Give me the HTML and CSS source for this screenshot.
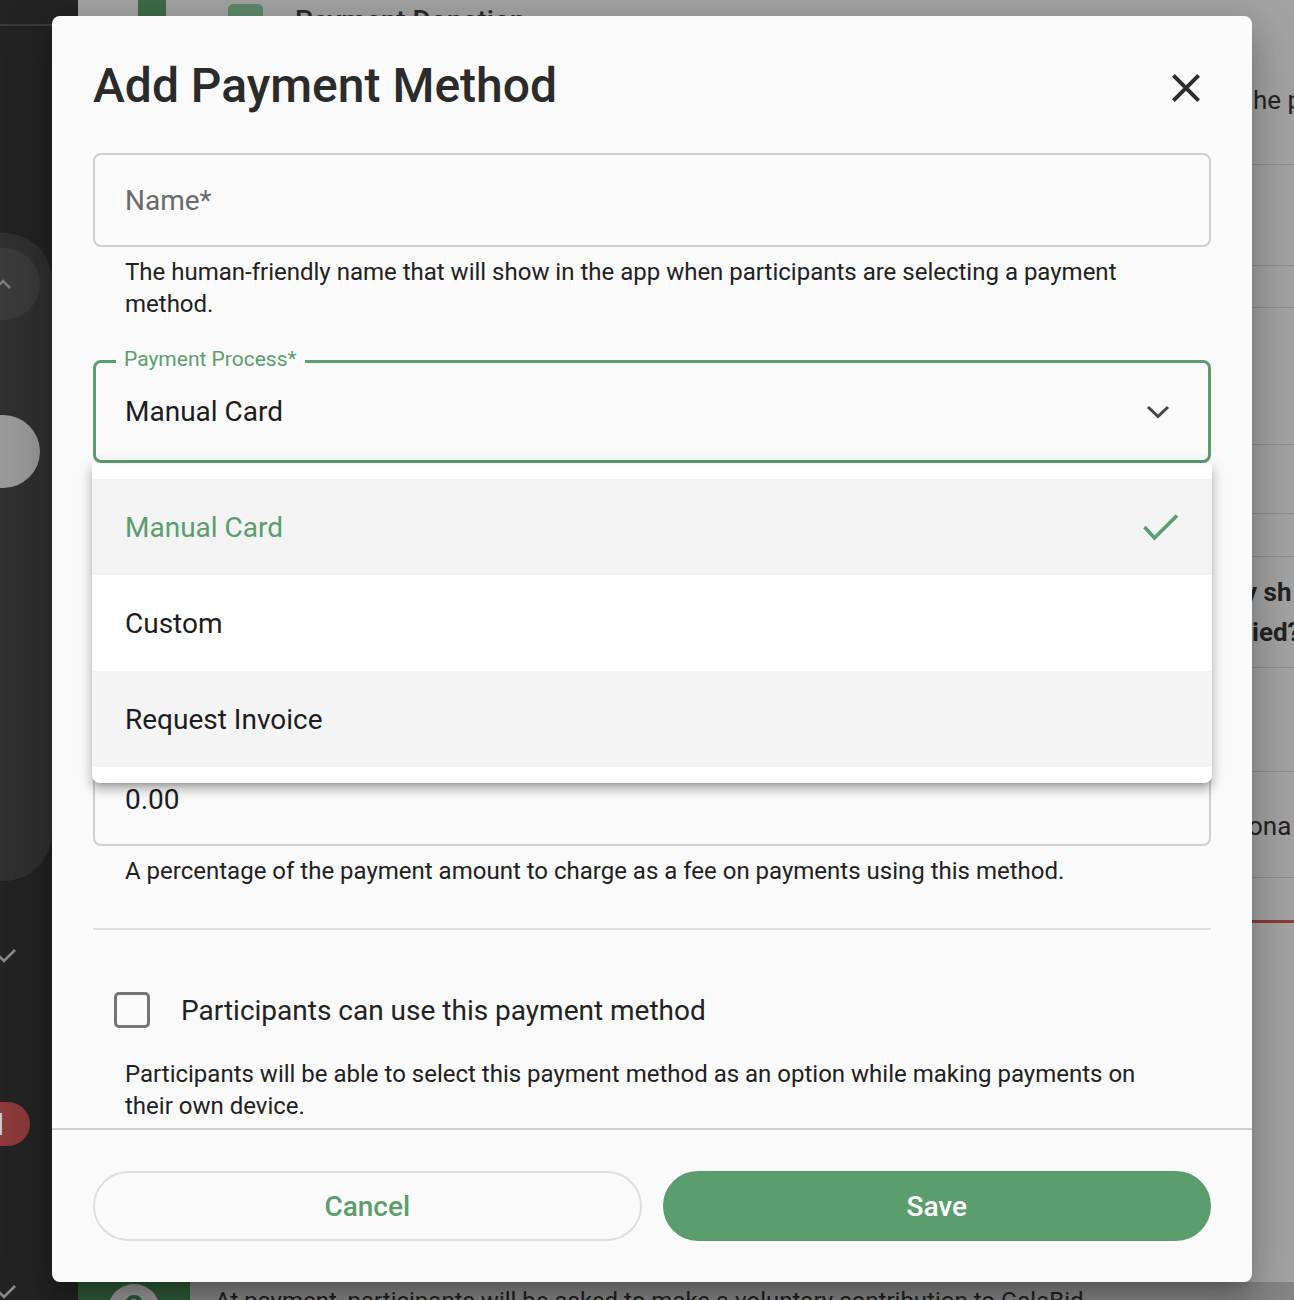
FILE: index.html
```html
<!DOCTYPE html>
<html lang="en">
<head>
<meta charset="utf-8">
<title>Add Payment Method</title>
<link rel="stylesheet" href="styles.css">
</head>
<body>
<div class="page">
  <aside class="sidebar">
    <div class="sb-line"></div>
    <div class="sb-pill">
      <div class="sb-circle">
        <svg width="18" height="12" viewBox="0 0 18 12"><polyline points="2,10 9,3 16,10" fill="none" stroke="#7a7a7a" stroke-width="2.5"/></svg>
      </div>
      <div class="sb-circle sb-circle-light"></div>
    </div>
    <div class="sb-check sb-check-1">
      <svg width="18" height="16" viewBox="0 0 18 16"><polyline points="1,8 6,13 17,2" fill="none" stroke="#8a8a8a" stroke-width="2.6"/></svg>
    </div>
    <div class="sb-badge"><span class="sb-badge-mark"></span></div>
    <div class="sb-check sb-check-2">
      <svg width="18" height="16" viewBox="0 0 18 16"><polyline points="1,8 6,13 17,2" fill="none" stroke="#8a8a8a" stroke-width="2.6"/></svg>
    </div>
  </aside>
  <main class="main">
    <section class="row r1">
      <div class="top-head">
        <span class="step-bar"></span>
        <span class="top-check"></span>
        <span class="top-title">Payment Donation</span>
      </div>
      <p class="edge edge-r1">he p</p>
    </section>
    <section class="row r2"></section>
    <section class="row r3"></section>
    <section class="row r4"></section>
    <section class="row r5"></section>
    <section class="row r6"></section>
    <section class="row r7">
      <p class="edge edge-bold edge-a">y sh</p>
      <p class="edge edge-bold edge-b">ied?</p>
    </section>
    <section class="row r8"></section>
    <section class="row r9">
      <p class="edge edge-r9">ona</p>
    </section>
    <section class="row r10"></section>
    <section class="row r11"></section>
    <section class="bottom-row">
      <div class="step-cell"><span class="step-num">2</span></div>
      <p class="bottom-text">At payment, participants will be asked to make a voluntary contribution to GalaBid</p>
    </section>
  </main>
</div>

<div class="modal" role="dialog" aria-labelledby="modal-title">
  <header class="modal-header">
    <h1 class="modal-title" id="modal-title">Add Payment Method</h1>
    <button class="close-btn" aria-label="Close">
      <svg width="48" height="48" viewBox="0 0 24 24"><path d="M19 6.41 17.59 5 12 10.59 6.41 5 5 6.41 10.59 12 5 17.59 6.41 19 12 13.41 17.59 19 19 17.59 13.41 12z" fill="#2d2d2d"/></svg>
    </button>
  </header>

  <div class="modal-body">
    <div class="field"><span class="placeholder">Name*</span></div>
    <p class="helper">The human-friendly name that will show in the app when participants are selecting a payment method.</p>

    <div class="select">
      <span class="select-label">Payment Process*</span>
      <span class="select-value">Manual Card</span>
      <svg class="chevron" width="24" height="14" viewBox="0 0 24 14"><polyline points="2,2 12,11.5 22,2" fill="none" stroke="#444" stroke-width="3"/></svg>
      <ul class="menu">
        <li class="menu-item selected">Manual Card
          <svg width="36" height="27" viewBox="0 0 36 27"><polyline points="1.5,13 11.5,24 34,1.5" fill="none" stroke="#5a9e6d" stroke-width="3.6"/></svg>
        </li>
        <li class="menu-item">Custom</li>
        <li class="menu-item hovered">Request Invoice</li>
      </ul>
    </div>

    <div class="field field-fee"><span class="value">0.00</span></div>
    <p class="helper">A percentage of the payment amount to charge as a fee on payments using this method.</p>

    <div class="divider"></div>

    <label class="check-row">
      <span class="checkbox"></span>
      <span class="check-label">Participants can use this payment method</span>
    </label>
    <p class="helper helper-check">Participants will be able to select this payment method as an option while making payments on their own device.</p>
  </div>

  <footer class="modal-footer">
    <button class="btn btn-cancel">Cancel</button>
    <button class="btn btn-save">Save</button>
  </footer>
</div>
</body>
</html>
```

FILE: styles.css
```css
* { box-sizing: border-box; }

html, body {
  margin: 0;
  padding: 0;
}

body {
  width: 1294px;
  height: 1300px;
  overflow: hidden;
  position: relative;
  background: #232323;
  font-family: Roboto, "Noto Sans", "Liberation Sans", sans-serif;
  color: #212121;
}

.page {
  display: flex;
  height: 1300px;
}

/* ---------- sidebar (behind the backdrop) ---------- */
.sidebar {
  width: 78px;
  flex: none;
  background: #232323;
  display: flex;
  flex-direction: column;
  overflow: hidden;
}

.sb-line {
  margin-top: 24px;
  height: 2px;
  background: #3a3a3a;
}

.sb-pill {
  margin-top: 207px;
  margin-left: -8px;
  width: 60px;
  height: 648px;
  background: #303030;
  border-radius: 0 48px 48px 0;
  padding-top: 15px;
  display: flex;
  flex-direction: column;
}

.sb-circle {
  width: 74px;
  height: 72px;
  flex: none;
  margin-left: -26px;
  border-radius: 50%;
  background: #3b3b3b;
  display: flex;
  align-items: center;
  justify-content: center;
}

.sb-circle-light {
  margin-top: 95px;
  height: 73px;
  background: #9a9a9a;
}

.sb-check {
  display: flex;
  margin-left: -2px;
}
.sb-check-1 { margin-top: 67px; }
.sb-check-2 { margin-top: 138px; }

.sb-badge {
  margin-top: 138px;
  margin-left: -20px;
  width: 50px;
  height: 44px;
  border-radius: 22px;
  background: #8b3939;
  display: flex;
  align-items: center;
  padding-left: 18px;
}
.sb-badge-mark {
  width: 4px;
  height: 22px;
  background: #c9c9c9;
}

/* ---------- main page (behind the backdrop) ---------- */
.main {
  flex: 1;
  min-width: 0;
  background: #a3a3a3;
  display: flex;
  flex-direction: column;
  overflow: hidden;
}

.row {
  flex: none;
  border-bottom: 1px solid #8c8c8c;
}
.r1 { height: 165px; }
.r2 { height: 101px; }
.r3 { height: 42px; }
.r4 { height: 137px; }
.r5 { height: 69px; }
.r6 { height: 43px; }
.r7 { height: 111px; padding-top: 15px; }
.r8 { height: 104px; }
.r9 { height: 106px; padding-top: 34px; }
.r10 { height: 45px; border-bottom: 3px solid #8e3a3a; }
.r11 { height: 359px; border-bottom: none; }

.top-head {
  height: 60px;
  display: flex;
  align-items: flex-start;
  padding-left: 60px;
}
.step-bar {
  width: 28px;
  height: 60px;
  background: #3e6a47;
}
.top-check {
  margin-left: 62px;
  margin-top: 4px;
  width: 35px;
  height: 35px;
  border-radius: 5px;
  background: #5f8869;
}
.top-title {
  margin-left: 32px;
  margin-top: 4px;
  font-size: 28px;
  font-weight: 500;
  line-height: 34px;
  color: #2a2a2a;
  white-space: nowrap;
}

.edge {
  margin: 0;
  font-size: 26px;
  line-height: 40px;
  color: #232323;
  white-space: nowrap;
}
.edge-r1 { margin-top: 20px; margin-left: 1175px; }
.edge-bold { font-weight: 700; }
.edge-a { margin-left: 1166px; }
.edge-b { margin-left: 1174px; }
.edge-r9 { margin-left: 1170px; }

.bottom-row {
  flex: none;
  height: 18px;
  display: flex;
  background: #858585;
  overflow: hidden;
}
.step-cell {
  width: 112px;
  flex: none;
  background: #2f5a37;
  padding-left: 30px;
  padding-top: 2px;
}
.step-num {
  display: flex;
  justify-content: center;
  width: 52px;
  height: 52px;
  border-radius: 50%;
  background: #9a9a9a;
  color: #2f5a37;
  font-size: 34px;
  font-weight: 700;
  line-height: 46px;
}
.bottom-text {
  margin: 0 0 0 25px;
  padding-top: 5px;
  font-size: 24px;
  line-height: 28px;
  color: #1f1f1f;
  white-space: nowrap;
}

/* ---------- modal ---------- */
.modal {
  position: absolute;
  left: 52px;
  top: 16px;
  width: 1200px;
  height: 1266px;
  background: #fafafa;
  border-radius: 8px;
  display: flex;
  flex-direction: column;
  box-shadow: 0 11px 15px -7px rgba(0,0,0,.2), 0 24px 38px 3px rgba(0,0,0,.14), 0 9px 46px 8px rgba(0,0,0,.12);
  z-index: 10;
}

.modal-header {
  height: 137px;
  flex: none;
  padding: 35px 41px 0 41px;
  display: flex;
  justify-content: space-between;
  align-items: flex-start;
}

.modal-title {
  margin: 0;
  font-size: 48px;
  font-weight: 500;
  line-height: 70px;
  color: #2b2b2b;
}

.close-btn {
  width: 50px;
  height: 50px;
  margin-top: 12px;
  padding: 0;
  border: none;
  background: transparent;
  display: flex;
  align-items: center;
  justify-content: center;
}

.modal-body {
  flex: 1;
  min-height: 0;
  padding: 0 41px;
  display: flex;
  flex-direction: column;
  overflow: hidden;
}

.field {
  flex: none;
  height: 94px;
  border: 2px solid #cfcfcf;
  border-radius: 8px;
  padding: 0 30px;
  display: flex;
  align-items: center;
  font-size: 28px;
}
.placeholder { color: #6a6a6a; }

.field-fee {
  margin-top: 289px;
}
.value { color: #1d1d1d; }

.helper {
  flex: none;
  margin: 9px 0 0;
  padding: 0 32px;
  font-size: 24px;
  line-height: 32px;
  color: #212121;
}

.select {
  position: relative;
  flex: none;
  margin-top: 40px;
  height: 103px;
  border: 3px solid #5a9e6d;
  border-radius: 8px;
  padding: 0 38px 0 29px;
  display: flex;
  align-items: center;
  justify-content: space-between;
  z-index: 2;
}

.select-label {
  position: absolute;
  top: -16px;
  left: 20px;
  padding: 0 8px;
  background: #fafafa;
  font-size: 21px;
  line-height: 24px;
  color: #5a9e6d;
}

.select-value {
  font-size: 28px;
  color: #1d1d1d;
}

.menu {
  position: absolute;
  top: calc(100% + 3px);
  left: -4px;
  right: -4px;
  margin: 0;
  padding: 16px 0;
  list-style: none;
  background: #ffffff;
  border-radius: 0 0 8px 8px;
  box-shadow: 0 5px 5px -3px rgba(0,0,0,.2), 0 8px 10px 1px rgba(0,0,0,.14), 0 3px 14px 2px rgba(0,0,0,.12);
}

.menu-item {
  height: 96px;
  padding: 0 33px 0 33px;
  display: flex;
  align-items: center;
  justify-content: space-between;
  font-size: 28px;
  color: #1d1d1d;
}
.menu-item.selected {
  background: #f3f3f3;
  color: #5a9e6d;
}
.menu-item.hovered {
  background: #f4f4f4;
}

.divider {
  flex: none;
  margin-top: 41px;
  height: 2px;
  background: #dddddd;
}

.check-row {
  flex: none;
  margin-top: 62px;
  height: 36px;
  display: flex;
  align-items: center;
}
.checkbox {
  margin-left: 21px;
  width: 36px;
  height: 36px;
  border: 3px solid #757575;
  border-radius: 5px;
}
.check-label {
  margin-left: 31px;
  font-size: 28px;
  color: #222222;
}

.helper-check {
  margin-top: 30px;
}

.modal-footer {
  flex: none;
  border-top: 2px solid #cfcfcf;
  padding: 41px;
  display: flex;
  gap: 21px;
}

.btn {
  flex: 1 1 0;
  min-width: 0;
  height: 70px;
  padding: 0;
  border-radius: 35px;
  font-family: Roboto, "Noto Sans", sans-serif;
  font-size: 28px;
  font-weight: 500;
  cursor: pointer;
}
.btn-cancel {
  background: transparent;
  border: 2px solid #dedede;
  color: #5a9e6d;
}
.btn-save {
  background: #5a9e6d;
  border: 2px solid #5a9e6d;
  color: #ffffff;
}
```
